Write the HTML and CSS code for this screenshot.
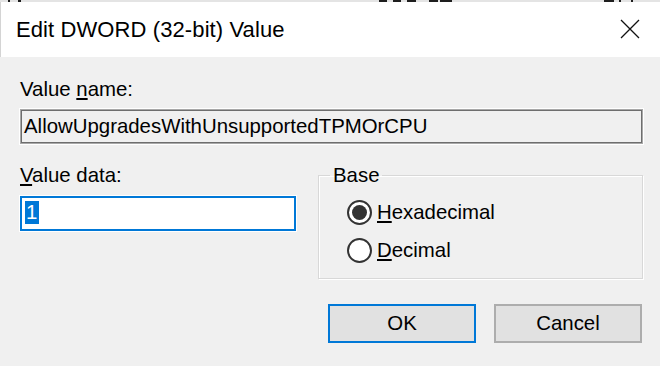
FILE: index.html
```html
<!DOCTYPE html>
<html>
<head>
<meta charset="utf-8">
<link rel="stylesheet" href="styles.css">
</head>
<body>
<div class="dialog">
  <div class="topstrip">
    <i class="frag" style="left:8px;width:2px"></i>
    <i class="frag" style="left:18px;width:3px"></i>
    <i class="frag" style="left:379px;width:8px"></i>
    <i class="frag" style="left:393px;width:8px"></i>
    <i class="frag" style="left:407px;width:9px"></i>
    <i class="frag" style="left:429px;width:9px"></i>
    <i class="frag" style="left:440px;width:12px"></i>
    <i class="frag" style="left:604px;width:10px"></i>
    <i class="frag" style="left:619px;width:2px"></i>
    <i class="frag" style="left:631px;width:2px"></i>
  </div>
  <div class="titlebar">
    <span class="title">Edit DWORD (32-bit) Value</span>
    <svg class="close" width="20" height="20" viewBox="0 0 20 20">
      <path d="M1 1 L19 19 M19 1 L1 19" stroke="#111" stroke-width="1.3" fill="none"/>
    </svg>
  </div>
  <div class="content">
    <div class="label">Value <u>n</u>ame:</div>
    <div class="namebox">AllowUpgradesWithUnsupportedTPMOrCPU</div>
    <div class="row">
      <div class="datacol">
        <div class="label"><u>V</u>alue data:</div>
        <div class="databox"><span class="sel">1</span></div>
      </div>
      <fieldset class="group">
        <legend class="legend">Base</legend>
        <div class="radios">
          <div class="radio">
            <span class="circle"><span class="dot"></span></span>
            <span class="rtext"><u>H</u>exadecimal</span>
          </div>
          <div class="radio">
            <span class="circle"></span>
            <span class="rtext"><u>D</u>ecimal</span>
          </div>
        </div>
      </fieldset>
    </div>
    <div class="buttons">
      <div class="btn default">OK</div>
      <div class="btn">Cancel</div>
    </div>
  </div>
</div>
</body>
</html>
```

FILE: styles.css
```css
html, body {
  margin: 0;
  padding: 0;
  background: #f0f0f0;
}
body {
  width: 660px;
  height: 366px;
  overflow: hidden;
  font-family: "Liberation Sans", Arial, sans-serif;
  font-size: 20.4px;
  color: #000;
}
.dialog {
  display: flex;
  flex-direction: column;
}
.topstrip {
  position: relative;
  height: 2px;
  background: #e4e4e4;
}
.frag {
  position: absolute;
  top: 0;
  height: 2px;
  background: #1e1e1e;
}
.titlebar {
  height: 55px;
  background: #fff;
  border-left: 1px solid #d4d4d4;
  display: flex;
  align-items: flex-start;
  justify-content: space-between;
  box-sizing: border-box;
  padding: 16px 20px 0 15px;
}
.title {
  font-size: 22px;
  line-height: 24px;
  letter-spacing: 0.1px;
}
.close {
  margin-top: 1px;
}
.content {
  display: flex;
  flex-direction: column;
  padding: 21px 17px 0 20px;
}
.label {
  line-height: 23px;
  height: 23px;
}
.namebox {
  margin-top: 8px;
  height: 35px;
  box-sizing: border-box;
  border: 1px solid #a8a8a8;
  box-shadow: inset 0 0 0 1px #6e6e6e, 0 0 0 1px #fff;
  background: #f0f0f0;
  line-height: 33px;
  padding-left: 3px;
}
.row {
  display: flex;
  margin-top: 20px;
  gap: 22px;
}
.datacol {
  width: 276px;
  display: flex;
  flex-direction: column;
}
.databox {
  margin-top: 9px;
  height: 35px;
  box-sizing: border-box;
  border: 2px solid #0078d7;
  box-shadow: 0 0 0 1px #fff;
  background: #fff;
  padding: 3px 0 0 3px;
}
.sel {
  display: inline-block;
  background: #0078d7;
  color: #fff;
  line-height: 23px;
  height: 23px;
  padding: 0 2px 0 1px;
}
.group {
  flex: 1;
  margin: 0;
  padding: 0;
  height: 115px;
  box-sizing: border-box;
  border: 1px solid #d8d8d8;
  box-shadow: inset 1px 1px 0 #fff, 1px 1px 0 #fff;
}
.legend {
  margin-left: 11px;
  padding: 0 3px;
  line-height: 23px;
}
.radios {
  display: flex;
  flex-direction: column;
  gap: 13px;
  padding: 13px 0 0 28px;
}
.radio {
  display: flex;
  align-items: center;
  height: 25px;
  gap: 5px;
}
.circle {
  width: 25px;
  height: 25px;
  box-sizing: border-box;
  border: 2px solid #333;
  border-radius: 50%;
  background: #fff;
  display: flex;
  align-items: center;
  justify-content: center;
}
.dot {
  width: 15px;
  height: 15px;
  border-radius: 50%;
  background: #333;
}
.rtext {
  line-height: 23px;
}
.buttons {
  display: flex;
  justify-content: flex-end;
  gap: 18px;
  margin-top: 25px;
  padding-right: 1px;
}
.btn {
  width: 148px;
  height: 39px;
  box-sizing: border-box;
  border: 2px solid #adadad;
  background: #e1e1e1;
  display: flex;
  align-items: center;
  justify-content: center;
}
.btn.default {
  border-color: #0078d7;
}
```
